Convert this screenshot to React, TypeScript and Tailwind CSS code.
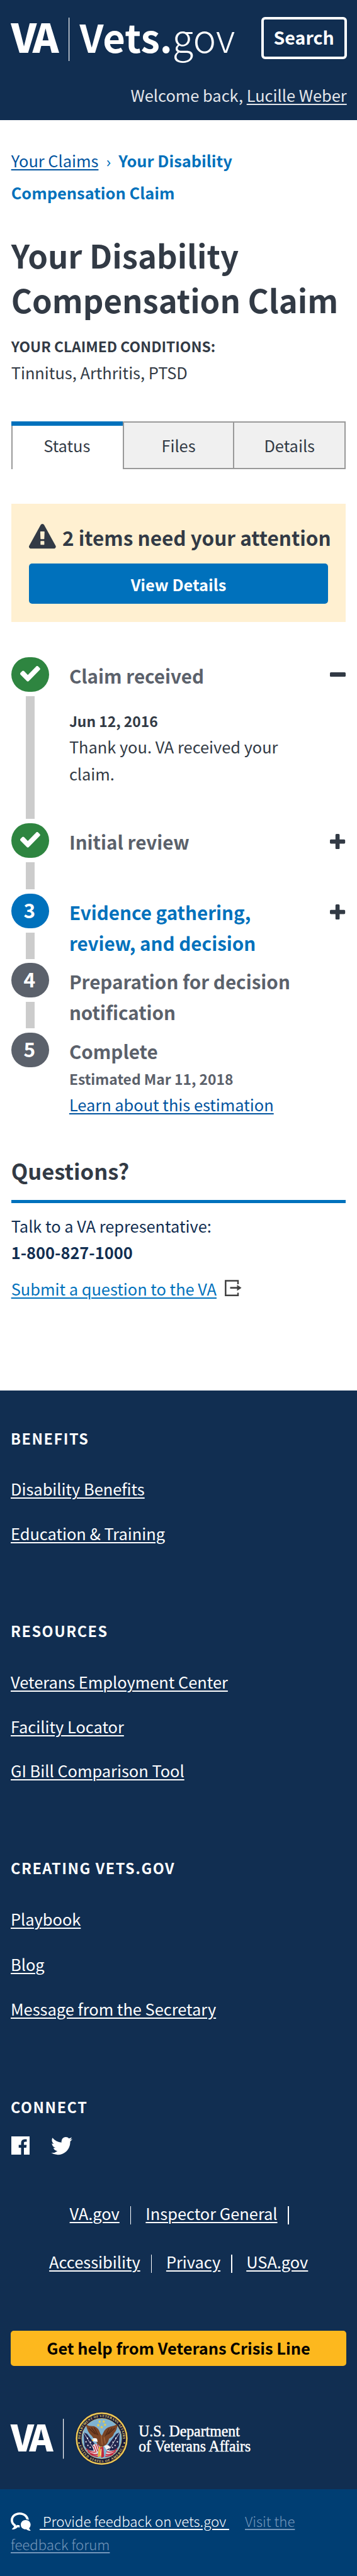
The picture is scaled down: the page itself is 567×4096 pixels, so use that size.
import type { ReactNode } from "react";

const FONT = "font-['Noto_Sans_CJK_SC','Noto_Sans',sans-serif]";
const U = "underline decoration-2 underline-offset-[2.6px]";

function Glyph({ d, box, className }: { d: string; box: string; className: string }) {
  return (
    <svg viewBox={box} preserveAspectRatio="none" className={className} fill="currentColor" aria-hidden="true">
      <path d={d} fillRule="evenodd" />
    </svg>
  );
}

const WARNING =
  "M1024 1375v-190q0-14-9.500-23.500t-22.500-9.500h-192q-13 0-22.500 9.500t-9.500 23.500v190q0 14 9.500 23.500t22.500 9.500h192q13 0 22.500-9.500t9.500-23.500zm-2-374l18-459q0-12-10-19-13-11-24-11h-220q-11 0-24 11-10 7-10 21l17 457q0 10 10 16.500t24 6.500h185q14 0 23.500-6.500t10.500-16.500zm-14-934l768 1408q35 63-2 126-17 29-46.500 46t-63.500 17h-1536q-34 0-63.500-17t-46.500-46q-37-63-2-126l768-1408q17-31 47-49t65-18 65 18 47 49z";
const CHECK =
  "M1671 566q0 40-28 68l-724 724-136 136q-28 28-68 28t-68-28l-136-136-362-362q-28-28-28-68t28-68l136-136q28-28 68-28t68 28l294 295 656-657q28-28 68-28t68 28l136 136q28 28 28 68z";
const PLUS =
  "M1600 736v192q0 40-28 68t-68 28h-416v416q0 40-28 68t-68 28h-192q-40 0-68-28t-28-68v-416h-416q-40 0-68-28t-28-68v-192q0-40 28-68t68-28h416v-416q0-40 28-68t68-28h192q40 0 68 28t28 68v416h416q40 0 68 28t28 68z";
const FACEBOOK =
  "M128 128h1536v1536h-476v-595h199l30-232h-229v-148q0-56 23.500-84t91.500-28l122-1v-207q-63-9-178-9-136 0-217.500 80t-81.500 226v171h-200v232h200v595h-820z";
const TWITTER =
  "M1684 408q-67 98-162 167 1 14 1 42 0 130-38 259.500t-115.500 248.500-184.500 210.500-258 146-323 54.500q-271 0-496-145 35 4 78 4 225 0 401-138-105-2-188-64.500t-114-159.500q33 5 61 5 43 0 85-11-112-23-185.500-111.500t-73.500-205.500v-4q68 38 146 41-66-44-105-115t-39-154q0-88 44-163 121 149 294.500 238.500t371.500 99.500q-8-38-8-74 0-134 94.500-228.500t228.500-94.500q140 0 236 102 109-21 205-78-37 115-142 178 93-10 186-50z";

function Header() {
  return (
    <header className="h-[191.300px] bg-[#112e51] pt-[26.600px] pr-[16.300px] pl-[17px]">
      <div className="flex items-start justify-between">
        <svg width="367" height="76" viewBox="0 0 367 76" fill="#fff" className={`overflow-visible ${FONT}`} role="img" aria-label="Vets.gov">
          <text x="0.500" y="57.300" fontSize="63.200" fontWeight="900" textLength="76" lengthAdjust="spacing">VA</text>
          <rect x="92" y="1" width="1.200" height="69" />
          <text x="109.600" y="56.600" fontSize="61.400" fontWeight="700">Vets.</text>
          <text x="256.600" y="56.600" fontSize="61.800" fontWeight="300">gov</text>
        </svg>
        <button className="flex h-[67.500px] w-[136px] items-center justify-center rounded-[6px] border-4 border-white pb-[2px] text-[28.600px] font-bold leading-[40px] text-white">
          Search
        </button>
      </div>
      <p className="mt-[28.600px] text-right text-[25.400px] leading-[40px] text-[#e4e6ea]">
        Welcome back, <a className={U}>Lucille Weber</a>
      </p>
    </header>
  );
}

function Alert() {
  return (
    <section className="mt-[57px] h-[187.800px] bg-[#fff0d1] px-[28.200px] pt-[32.600px]">
      <div className="flex items-start">
        <Glyph d={WARNING} box="0 0 1792 1664" className="h-[39.300px] w-[42.700px] shrink-0" />
        <h2 className="ml-[10.500px] whitespace-nowrap text-[31.500px] font-bold leading-[42px]">2 items need your attention</h2>
      </div>
      <button className="mt-[21px] flex h-[63.800px] w-full items-center justify-center rounded-[5px] bg-[#0071bc] pt-[2px] text-[25.400px] font-bold text-white">
        View Details
      </button>
    </section>
  );
}

type StepProps = { marker: ReactNode; color: string; bar?: string; height: string; title: string; titleColor?: string; toggle?: "plus" | "minus"; children?: ReactNode };

function Step({ marker, color, bar, height, title, titleColor = "text-[#5b616b]", toggle, children }: StepProps) {
  return (
    <li className={`flex ${height}`}>
      <div className="flex w-[60.400px] shrink-0 flex-col items-center">
        <div className={`flex h-[55px] w-full shrink-0 justify-center rounded-[27.500px] text-white ${color}`}>{marker}</div>
        {bar && <div className={`mt-[7px] w-[14px] shrink-0 bg-[#ccc] ${bar}`} />}
      </div>
      <div className="ml-[31.800px] w-[370px] pt-[4.700px]">
        <h3 className={`text-[29.600px] font-bold leading-[49.200px] ${titleColor}`}>{title}</h3>
        {children}
      </div>
      <div className="ml-auto pt-[16.900px] pr-[0.800px]">
        {toggle === "plus" && <Glyph d={PLUS} box="192 128 1408 1408" className="size-[24.200px]" />}
        {toggle === "minus" && <div className="mt-[7.400px] h-[6.600px] w-[24.200px] rounded-[1.600px] bg-[#323a45]" />}
      </div>
    </li>
  );
}

const tick = <Glyph d={CHECK} box="121 340 1550 1182" className="mt-[14.200px] h-[24.600px] w-[31.800px]" />;
const num = (n: number) => <span className="-ml-[2px] text-[31.700px] font-bold leading-[50px]">{n}</span>;

function Steps() {
  return (
    <ol className="mt-[56.600px]">
      <Step marker={tick} color="bg-[#2e8540]" bar="h-[195px]" height="h-[264px]" title="Claim received" toggle="minus">
        <p className="mt-[28.700px] text-[22.860px] font-bold leading-[36px]">Jun 12, 2016</p>
        <p className="mt-[2.400px] text-[25.400px] leading-[42.800px]">Thank you. VA received your claim.</p>
      </Step>
      <Step marker={tick} color="bg-[#2e8540]" bar="h-[42.500px]" height="h-[111.800px]" title="Initial review" toggle="plus" />
      <Step marker={num(3)} color="bg-[#0071bc]" bar="h-[42.500px]" height="h-[109.900px]" title="Evidence gathering, review, and decision" titleColor="text-[#0071bc]" toggle="plus" />
      <Step marker={num(4)} color="bg-[#5b616b]" bar="h-[42.500px]" height="h-[111.400px]" title="Preparation for decision notification" />
      <Step marker={num(5)} color="bg-[#5b616b]" height="h-[134.500px]" title="Complete">
        <p className="mt-[0.500px] text-[22.860px] font-bold leading-[36px] text-[#5b616b]">Estimated Mar 11, 2018</p>
        <p className="mt-[2.300px] text-[25.400px] leading-[42.800px]">
          <a className={`text-[#00539f] ${U}`}>Learn about this estimation</a>
        </p>
      </Step>
    </ol>
  );
}

function Questions() {
  return (
    <section className="mt-[60.400px] text-[25.400px] leading-[42px] text-[#112e51]">
      <h2 className="text-[34.500px] font-bold leading-[48px] text-[#323a45]">Questions?</h2>
      <div className="mt-[22.800px] h-[5.300px] bg-[#0071bc]" />
      <p className="mt-[15.100px]">Talk to a VA representative:</p>
      <p className="font-bold">1-800-827-1000</p>
      <p className="mt-[15.200px] flex text-[#0071bc]">
        <a className={U}>Submit a question to the VA</a>
        <svg className="mt-[7px] ml-[13.500px] h-[26.400px] w-[26.600px]" viewBox="0 0 26.600 26.400" fill="none" aria-hidden="true">
          <path d="M21 7V1.500H1.300V24.800H21V20.500" stroke="#414141" strokeWidth="2.500" />
          <path d="M8.500 12.700H20" stroke="#414141" strokeWidth="2.700" />
          <path d="M19.500 7.900L26.600 12.700L19.500 17.500Z" fill="#414141" />
        </svg>
      </p>
    </section>
  );
}

function LinkGroup({ title, links, leading, gap }: { title: string; links: string[]; leading: string; gap: string }) {
  return (
    <section className={gap}>
      <h4 className="text-[23.400px] font-bold leading-[36px] tracking-[1.550px]">{title}</h4>
      <ul className={`mt-[27.900px] ${leading}`}>
        {links.map((l) => (
          <li key={l}><a className={U}>{l}</a></li>
        ))}
      </ul>
    </section>
  );
}

function Divider() {
  return <span className="mt-[9px] h-[28.500px] w-[1.600px] bg-white" />;
}

const STARS = [[176, 78], [198, 78], [169, 97], [205, 95], [187, 107]];
const FLAG_STARS = [[112, 165], [104, 184], [114, 203], [128, 186], [126, 213], [262, 165], [270, 184], [258, 203], [247, 186], [244, 213]];

function Seal() {
  return (
    <g>
      <circle cx="187" cy="167" r="140" fill="#15173c" />
      <circle cx="187" cy="167" r="133" fill="none" stroke="#d9b13b" strokeWidth="9" />
      <circle cx="187" cy="167" r="134" fill="none" stroke="#f7e27c" strokeWidth="3" />
      <circle cx="187" cy="167" r="107" fill="#cdb04a" />
      <circle cx="187" cy="167" r="105" fill="#7fb3d3" />
      <path id="seal-top" d="M74.500 178A113 113 0 1 1 299.500 178" fill="none" />
      <path id="seal-bottom" d="M63.500 186A125 125 0 0 0 310.500 186" fill="none" />
      <g fill="#ecd76a" fontSize="17.500" fontWeight="700" fontFamily="'Liberation Serif',serif">
        <text><textPath href="#seal-top" startOffset="2%" textLength="360" lengthAdjust="spacing">DEPARTMENT OF VETERANS AFFAIRS</textPath></text>
        <text><textPath href="#seal-bottom" startOffset="5%" textLength="315" lengthAdjust="spacing">UNITED STATES OF AMERICA</textPath></text>
      </g>
      <circle cx="67" cy="190" r="4" fill="#ecd76a" />
      <circle cx="307" cy="190" r="4" fill="#ecd76a" />
      <path d="M91 134L110 142L165 215L150 248L118 238L96 205Z" fill="#23264f" />
      <path d="M283 134L264 142L209 215L224 248L256 238L278 205Z" fill="#23264f" />
      <path d="M88 130L156 238M286 130L218 238" stroke="#e2e6ea" strokeWidth="3" />
      <g fill="#fff">
        {FLAG_STARS.map(([x, y]) => (
          <circle key={`${x}-${y}`} cx={x} cy={y} r="3.500" />
        ))}
      </g>
      <path d="M103 216Q128 238 158 226L168 262Q124 254 103 216Z" fill="#f2efef" />
      <path d="M271 216Q246 238 216 226L206 262Q250 254 271 216Z" fill="#f2efef" />
      <path d="M105 220Q130 244 162 236M113 234Q134 252 166 250M269 220Q244 244 212 236M261 234Q240 252 208 250M125 246Q142 258 168 260M249 246Q232 258 206 260" stroke="#c0283c" strokeWidth="6" fill="none" />
      <path d="M104 94Q122 104 146 102Q172 110 180 142L188 152L196 136Q204 112 232 104Q256 100 270 92Q270 122 252 140Q248 158 226 168Q220 196 202 204L184 214L162 192L154 172Q142 166 134 152Q112 136 104 94Z" fill="#7b4426" />
      <path d="M118 112L152 144M132 110L160 146M148 110L168 150M256 112L222 144M242 112L214 148M226 114L206 154" stroke="#4c2818" strokeWidth="4" fill="none" />
      <path d="M184 150L190 200M200 160L206 192" stroke="#a3653a" strokeWidth="5" />
      <path d="M136 170Q146 160 162 168L166 184Q150 182 138 180Z" fill="#fff" />
      <path d="M134 172L144 172L140 181Q134 180 134 172Z" fill="#e9b93c" />
      <path d="M140 200Q160 188 174 208L164 244Q138 236 140 200Z" fill="#f4f1f1" />
      <path d="M144 204L158 240M154 197L166 234M164 196L174 226" stroke="#c0283c" strokeWidth="5" />
      <path d="M200 206Q220 192 234 214L212 226Z" fill="#f4f1f1" />
      <path d="M172 210L166 266L180 258L186 268L194 236L188 208Z" fill="#e9b93c" />
      <path d="M178 214L186 268L200 262L196 210Z" fill="#c0283c" />
      <path d="M184 220L182 256" stroke="#f4e6a0" strokeWidth="5" />
      <g fill="#f2cf3f">
        {STARS.map(([x, y]) => (
          <path key={`${x}-${y}`} transform={`translate(${x} ${y})`} d="M0-9L2.300-3L8.600-2.800L3.700 1.200L5.300 7.300L0 3.800L-5.300 7.300L-3.700 1.200L-8.600-2.800L-2.300-3Z" />
        ))}
      </g>
    </g>
  );
}

function Footer() {
  return (
    <footer>
      <div className="bg-[#112e51] pt-[57.700px] pr-[17px] pb-[38.700px] pl-[17px] text-[25.400px] text-white">
        <LinkGroup title="BENEFITS" links={["Disability Benefits", "Education & Training"]} leading="leading-[70.900px]" gap="" />
        <LinkGroup title="RESOURCES" links={["Veterans Employment Center", "Facility Locator", "GI Bill Comparison Tool"]} leading="leading-[70.900px]" gap="mt-[100.500px]" />
        <LinkGroup title="CREATING VETS.GOV" links={["Playbook", "Blog", "Message from the Secretary"]} leading="leading-[71.500px]" gap="mt-[101px]" />
        <h4 className="mt-[100.900px] text-[23.400px] font-bold leading-[36px] tracking-[1.550px]">CONNECT</h4>
        <div className="mt-[29.100px] flex h-[30px] items-start pl-[1.100px]">
          <Glyph d={FACEBOOK} box="128 128 1536 1536" className="h-[29.300px] w-[29px]" />
          <Glyph d={TWITTER} box="108 256 1576 1280" className="mt-[1.600px] ml-[33.500px] h-[28.300px] w-[34px]" />
        </div>
        <div className="mt-[72.600px] flex h-[76.800px] items-start pl-[93.600px] leading-[40px]">
          <a className={`mr-[17px] ${U}`}>VA.gov</a><Divider />
          <a className={`mr-[16.400px] ml-[23px] ${U}`}>Inspector General</a><Divider />
        </div>
        <div className="flex h-[40px] items-start pl-[61.100px] leading-[40px]">
          <a className={`mr-[16.800px] ${U}`}>Accessibility</a><Divider />
          <a className={`mr-[17px] ml-[22.800px] ${U}`}>Privacy</a><Divider />
          <a className={`ml-[22.500px] ${U}`}>USA.gov</a>
        </div>
        <button className="mt-[89.500px] flex h-[56.700px] w-full items-center justify-center rounded-[5px] bg-[#fdb81e] pb-[2px] font-bold leading-[40px] text-black">
          Get help from Veterans Crisis Line
        </button>
        <svg width="390" height="85" viewBox="0 0 390 85" fill="#fff" className={`mt-[72.200px] block overflow-visible ${FONT}`} role="img" aria-label="U.S. Department of Veterans Affairs">
          <text x="0" y="62.800" fontSize="57.600" fontWeight="900" textLength="67.500" lengthAdjust="spacing">VA</text>
          <rect x="83" y="11" width="1.200" height="63.500" />
          <g transform="translate(102.500 0) scale(0.3 0.3036) translate(-47 -27)"><Seal /></g>
          <g fontFamily="'Liberation Serif',serif" fontSize="26" stroke="#fff" strokeWidth="0.500">
            <text x="203.200" y="38.700" textLength="160.600" lengthAdjust="spacingAndGlyphs">U.S. Department</text>
            <text x="203.200" y="62.600" textLength="178" lengthAdjust="spacingAndGlyphs">of Veterans Affairs</text>
          </g>
        </svg>
      </div>
      <div className="h-[138.500px] bg-[#003e73] pt-[31.700px] pl-[17px] text-[22.250px] font-light leading-[36.900px] text-white">
        <div className="flex">
          <svg className="mt-[5.300px] h-[29.500px] w-[32px]" viewBox="0 0 32 29.500" fill="#fff" aria-hidden="true">
            <path d="M28.800 11.700C28.300 5 22 0 14.300 0C6.200 0 0 5.400 0 12.300C0 16.300 2 19.700 5.400 22C4.700 23.800 3.300 25.200 1.600 26.300C2.200 27 3 27.100 4 27C6.900 26.600 9.300 25.300 11 23.600C12.200 23.800 13.500 23.800 14.800 23.600C14.200 22.400 13.900 21.200 13.900 20C12.700 20.200 11.300 20.100 10 19.800L8.500 21.300C8.600 20.500 8.500 19.800 8 19.300C5.200 17.600 3.700 15.200 3.700 12.300C3.700 7.500 8.300 3.600 14.300 3.600C19.600 3.600 24 6.700 24.800 11C26.200 10.900 27.600 11.100 28.800 11.700Z" />
            <path d="M23.800 12C28.200 12 31.600 15.200 31.600 19.300C31.600 21.700 30.700 23.700 29.200 25.100C29.700 26.600 30.600 27.600 31.800 28.700C29 29.300 26.600 28.400 24.900 26.700C19.700 27.200 16 23.800 16 19.400C16 15.200 19.400 12 23.800 12Z" />
          </svg>
          <a className={`ml-[14px] whitespace-pre ${U}`}>{" Provide feedback on vets.gov "}</a>
          <a className={`ml-[25px] text-[#7496ba] ${U}`}>Visit the</a>
        </div>
        <a className={`text-[#7496ba] ${U}`}>feedback forum</a>
      </div>
    </footer>
  );
}

export default function App() {
  return (
    <div className={`h-[4096px] w-[567px] overflow-hidden bg-white text-[#323a45] ${FONT}`}>
      <Header />
      <main className="mb-[141.400px] px-[17.700px]">
        <nav className="pt-[38.700px] text-[25.400px] leading-[51.400px] text-[#0071bc]">
          <a className={`text-[#00539f] ${U}`}>Your Claims</a>
          <span className="mr-[12px] ml-[12.500px] font-['Open_Sans',sans-serif] text-[24px] leading-none">›</span>
          <b>Your Disability<br />Compensation Claim</b>
        </nav>
        <h1 className="mt-[37.700px] whitespace-nowrap text-[50.800px] font-bold leading-[70.900px]">Your Disability<br />Compensation Claim</h1>
        <p className="mt-[20.200px] text-[22.860px] font-bold leading-[36px]">YOUR CLAIMED CONDITIONS:</p>
        <p className="mt-[2.300px] text-[25.400px] leading-[43px]">Tinnitus, Arthritis, PTSD</p>
        <div className="mt-[55.900px] grid h-[74.100px] grid-cols-3 text-center text-[25.400px]">
          <div className="flex flex-col">
            <div className="h-[7px] bg-[#0071bc]" />
            <div className="flex-1 border-l-2 border-[#999] pr-[2px] leading-[62px]">Status</div>
          </div>
          <div className="border-2 border-[#999] bg-[#f0f0f0] leading-[72px]">Files</div>
          <div className="border-y-2 border-r-2 border-[#999] bg-[#f0f0f0] leading-[72px]">Details</div>
        </div>
        <Alert />
        <Steps />
        <Questions />
      </main>
      <Footer />
    </div>
  );
}
